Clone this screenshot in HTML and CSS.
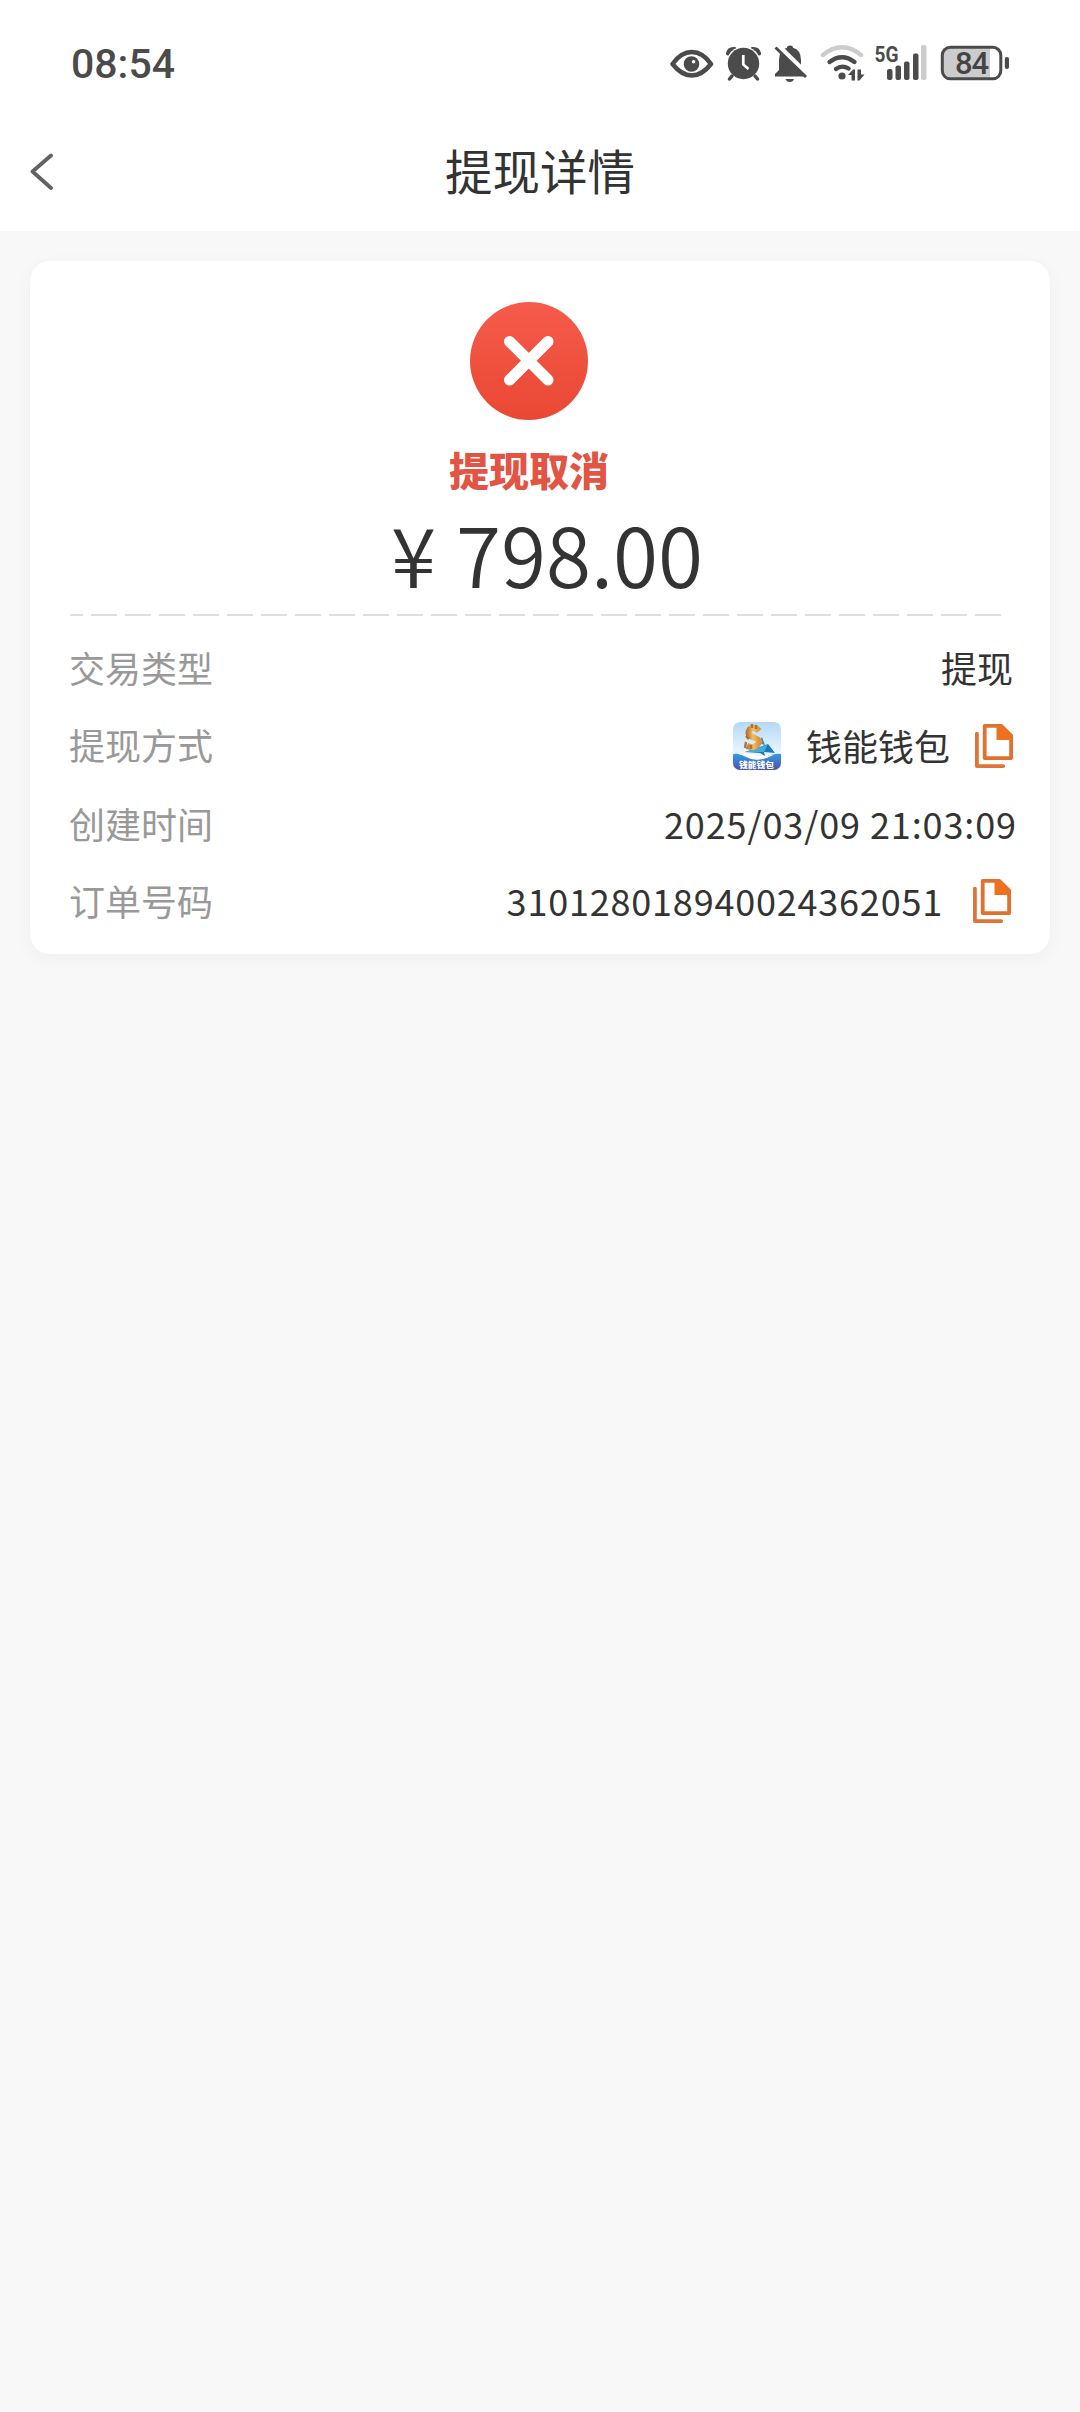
FILE: index.html
```html
<!DOCTYPE html>
<html lang="zh-CN">
<head>
<meta charset="utf-8">
<title>提现详情</title>
<link rel="stylesheet" href="styles.css">
</head>
<body>
<svg class="defs" width="0" height="0" aria-hidden="true">
  <symbol id="copy" viewBox="0 0 38 44">
    <path d="M1.9 9.6V42.1H28.2" fill="none" stroke="#dd7438" stroke-width="3.8" stroke-linecap="round" stroke-linejoin="round"/>
    <path d="M9.7 1.9H26.2L36.1 11.7V34.1H9.7Z" fill="#fff" stroke="#e0712f" stroke-width="3.8" stroke-linejoin="round"/>
    <path d="M21.5 2H27L36.5 11.5V16H21.5Z" fill="#f07022"/>
  </symbol>
</svg>
<header class="top">
  <div class="status">
    <time class="clock">08:54</time>
    <div class="status-icons">
      <svg width="44" height="46" viewBox="670 40 44 46"><path d="M672.5 64Q681 52 691.8 52T711 64Q702 75.500 691.800 75.500T672.500 64Z" fill="none" stroke="#4b4b4b" stroke-width="4.500" stroke-linejoin="round"/><circle cx="691.5" cy="64" r="7.800" fill="#4b4b4b"/><circle cx="693.600" cy="61.800" r="1.700" fill="#fff"/></svg>
      <svg width="36" height="46" viewBox="726 40 36 46"><g fill="none" stroke="#4b4b4b" stroke-linecap="round"><path d="M728 53.500Q729 48.500 734.500 49M752.500 49Q758 48.500 759 53.500" stroke-width="4"/></g><circle cx="743.500" cy="63.500" r="17" fill="#fff"/><circle cx="743.500" cy="63.500" r="15.700" fill="#4b4b4b"/><path d="M732 76L729.500 79M755 76L757.500 79" stroke="#4b4b4b" stroke-width="3.500" stroke-linecap="round"/><path d="M743.300 55V64.500L748.500 69" fill="none" stroke="#fff" stroke-width="2.700"/></svg>
      <svg width="36" height="46" viewBox="773 40 36 46"><path d="M775 76.500V74L779 70V60Q779 50 787 47.800Q787 45.500 790 45.500T793 47.800Q801 50 801 60V71L806 76.500Z" fill="#4b4b4b"/><path d="M785.500 79H794Q793 82 789.800 82T785.500 79" fill="#4b4b4b"/><path d="M777 44.500L810 77" stroke="#fff" stroke-width="5"/><path d="M775.500 47.500L806 77" stroke="#4b4b4b" stroke-width="3"/></svg>
      <svg width="46" height="46" viewBox="820 40 46 46"><g fill="none" stroke-linecap="round" stroke-width="4.400"><path d="M823 55Q842 39.500 861 55" stroke="#ccc"/><path d="M829.500 62Q842 52.500 854.500 62M836 69Q842 64.500 848.500 68.500" stroke="#4b4b4b"/></g><circle cx="842" cy="76" r="3.600" fill="#4b4b4b"/><path d="M848 75L853 69.500H855V80.500H851.500V75ZM857.500 69.500V80.500H859.500L864.500 74.500H861V69.500Z" fill="#4b4b4b"/></svg>
      <svg width="54" height="46" viewBox="874 40 54 46"><text class="net" x="874.500" y="61.500" textLength="24" lengthAdjust="spacingAndGlyphs">5G</text><g fill="#4b4b4b"><rect x="887" y="69" width="5.500" height="11" rx="2"/><rect x="895.500" y="65.500" width="5.500" height="14.500" rx="2"/><rect x="904" y="61.500" width="5.500" height="18.500" rx="2"/><rect x="913" y="53.500" width="5.500" height="26.500" rx="2"/></g><rect x="921" y="45" width="5.500" height="35" rx="2" fill="#ccc"/></svg>
      <svg width="70" height="46" viewBox="940 40 70 46"><rect x="942.300" y="47.300" width="58.500" height="31.500" rx="8" fill="#fff"/><path d="M990 47.300H950.300Q942.300 47.300 942.300 55.300V70.800Q942.300 78.800 950.300 78.800H990Z" fill="#ccc"/><rect x="942.300" y="47.300" width="58.500" height="31.500" rx="8" fill="none" stroke="#4b4b4b" stroke-width="3"/><rect x="1004.800" y="57" width="4.200" height="12" rx="2" fill="#4b4b4b"/><text class="charge" x="955" y="73.500" textLength="34">84</text></svg>
    </div>
  </div>
  <div class="nav">
    <svg class="back" width="24" height="38" viewBox="30 153 24 38"><path d="M51 155.500L32.500 171.500L51 188" fill="none" stroke="#626262" stroke-width="3.800" stroke-linecap="round" stroke-linejoin="round"/></svg>
    <h1>提现详情</h1>
  </div>
</header>
<main class="card">
  <section class="summary">
    <svg width="118" height="118" viewBox="0 0 118 118"><defs><linearGradient id="red" x2="0" y2="1"><stop stop-color="#f65b4b"/><stop offset="1" stop-color="#e94834"/></linearGradient></defs><circle cx="59" cy="59" r="59" fill="url(#red)"/><path d="M39.500 39.500L78 78M78 39.500L39.500 78" stroke="#fff" stroke-width="11" stroke-linecap="round"/></svg>
    <p class="state">提现取消</p>
    <p class="amount"><span class="yen">¥</span><span>798.00</span></p>
  </section>
  <svg class="divider" width="936" height="2" viewBox="0 0 936 2"><path d="M-13 1H936" stroke="#dedede" stroke-width="2" stroke-dasharray="26 8"/></svg>
  <dl class="rows">
    <div class="row"><dt>交易类型</dt><dd>提现</dd></div>
    <div class="row"><dt>提现方式</dt><dd class="method">
      <svg class="logo" width="48" height="48" viewBox="0 0 48 48">
        <defs>
          <linearGradient id="sky" x2="0" y2="1"><stop stop-color="#b5d8f8"/><stop offset=".7" stop-color="#eef8ff"/></linearGradient>
          <linearGradient id="sea" x2="0" y2="1"><stop stop-color="#369be5"/><stop offset="1" stop-color="#4c50ac"/></linearGradient>
          <linearGradient id="gold"><stop stop-color="#b87731"/><stop offset=".5" stop-color="#f5bd61"/><stop offset="1" stop-color="#dc943c"/></linearGradient>
          <clipPath id="tile"><rect width="48" height="48" rx="7"/></clipPath>
        </defs>
        <g clip-path="url(#tile)">
          <rect width="48" height="48" fill="url(#sky)"/>
          <path d="M25 21L29 15L32 23Z" fill="#2c91c8"/>
          <path d="M12 30L35 22L42 31L31 30L32 34L27 31Z" fill="#1c78bd"/>
          <path d="M12 30L31 24L35 22L31 30Z" fill="#43addd"/>
          <path d="M26 9Q22 4 17 7Q14 11 17 14L22 16Q28 18 25 22Q21 27 14 24" fill="none" stroke="url(#gold)" stroke-width="6"/>
          <path d="M19 2V6M23 3V7M13 20L12 26M18 23V27M13 14L16 17" stroke="#ad752f" stroke-width="2.500"/>
          <path d="M0 32Q9 31 15 35Q25 40 35 34Q41 31 48 32V48H0Z" fill="url(#sea)"/>
          <path d="M5 32Q13 31 19 32.500Q30 36 42 32Q35 36 30 37Q20 39 13 35Q10 33 5 32Z" fill="#fff"/>
          <text class="logo-name" x="6" y="45.500" textLength="35" lengthAdjust="spacingAndGlyphs">钱能钱包</text>
        </g>
      </svg>
      <span class="wallet">钱能钱包</span><svg class="copy" width="38" height="44"><use href="#copy"/></svg></dd></div>
    <div class="row"><dt>创建时间</dt><dd class="date">2025/03/09 21:03:09</dd></div>
    <div class="row"><dt>订单号码</dt><dd class="order"><span class="num">310128018940024362051</span><svg class="copy" width="38" height="44"><use href="#copy"/></svg></dd></div>
  </dl>
</main>
</body>
</html>
```
FILE: styles.css
```css
* { box-sizing: border-box; margin: 0; padding: 0; }
body {
  min-height: 2412px;
  background: #f8f8f8;
  color: #333;
  font-family: "Noto Sans CJK SC", sans-serif;
}
svg { display: block; flex: none; }
.defs { display: none; }
.top { height: 231px; background: #fff; }
.status {
  height: 126px;
  padding: 0 70px 0 71px;
  display: flex;
  justify-content: space-between;
}
.clock {
  padding-top: 40px;
  font: 500 41px/48px Roboto, sans-serif;
  color: #4b4b4b;
}
.status-icons {
  display: flex;
  gap: 11px;
  padding-top: 40px;
}
.status-icons svg:first-child { margin-right: 1px; }
.status-icons svg:nth-child(n+5) { margin-left: -3px; }
.status-icons svg:last-child { margin-left: 1px; }
.net { font: 700 22px Roboto, sans-serif; fill: #4b4b4b; }
.charge { font: 500 31px Roboto, sans-serif; fill: #444; }
.nav {
  height: 92px;
  padding: 0 30px;
  display: grid;
  grid-template-columns: 24px 1fr 24px;
  align-items: center;
}
.nav h1 {
  padding-bottom: 5px;
  text-align: center;
  font-size: 47.5px;
  line-height: 72px;
  font-weight: 400;
}
.card {
  height: 693px;
  margin: 30px 30px 0;
  padding: 41px 36px 16px 40px;
  background: #fff;
  border-radius: 20px;
  box-shadow: 0 4px 16px rgba(60, 80, 110, .05);
}
.summary {
  width: 918px;
  height: 312px;
  display: flex;
  flex-direction: column;
  align-items: center;
}
.state {
  margin-top: 19px;
  font-size: 40px;
  line-height: 60px;
  font-weight: 900;
  color: #e25443;
}
.amount {
  display: flex;
  margin-top: 4px;
  padding-left: 36px;
  font-size: 82px;
  font-weight: 350;
  line-height: 100px;
}
.yen { margin-right: 20px; }
.rows { padding-top: 14px; }
.row {
  height: 78px;
  display: flex;
  justify-content: space-between;
  align-items: center;
  font-size: 36px;
  line-height: 50px;
}
.row:nth-child(2) { height: 76px; }
.row:nth-child(3) { height: 82px; }
.row:nth-child(4) { height: 72px; }
dt { margin-left: -1px; padding-bottom: 5px; color: #999; }
dd { display: flex; align-items: center; padding: 0 1px 5px 0; }
.method, .order { padding-bottom: 0; }
.method { padding-right: 1px; }
.wallet { margin: 0 25px 0 25px; padding-bottom: 3px; }
.logo-name { font: 900 8px "Noto Sans CJK SC", sans-serif; fill: #fff; }
.date { padding-right: 0; margin-right: -3px; letter-spacing: .9px; }
.order { padding-right: 3px; }
.num { margin-right: 30px; padding-bottom: 5px; letter-spacing: .8px; }
.order .copy { margin-top: -2px; }
```
